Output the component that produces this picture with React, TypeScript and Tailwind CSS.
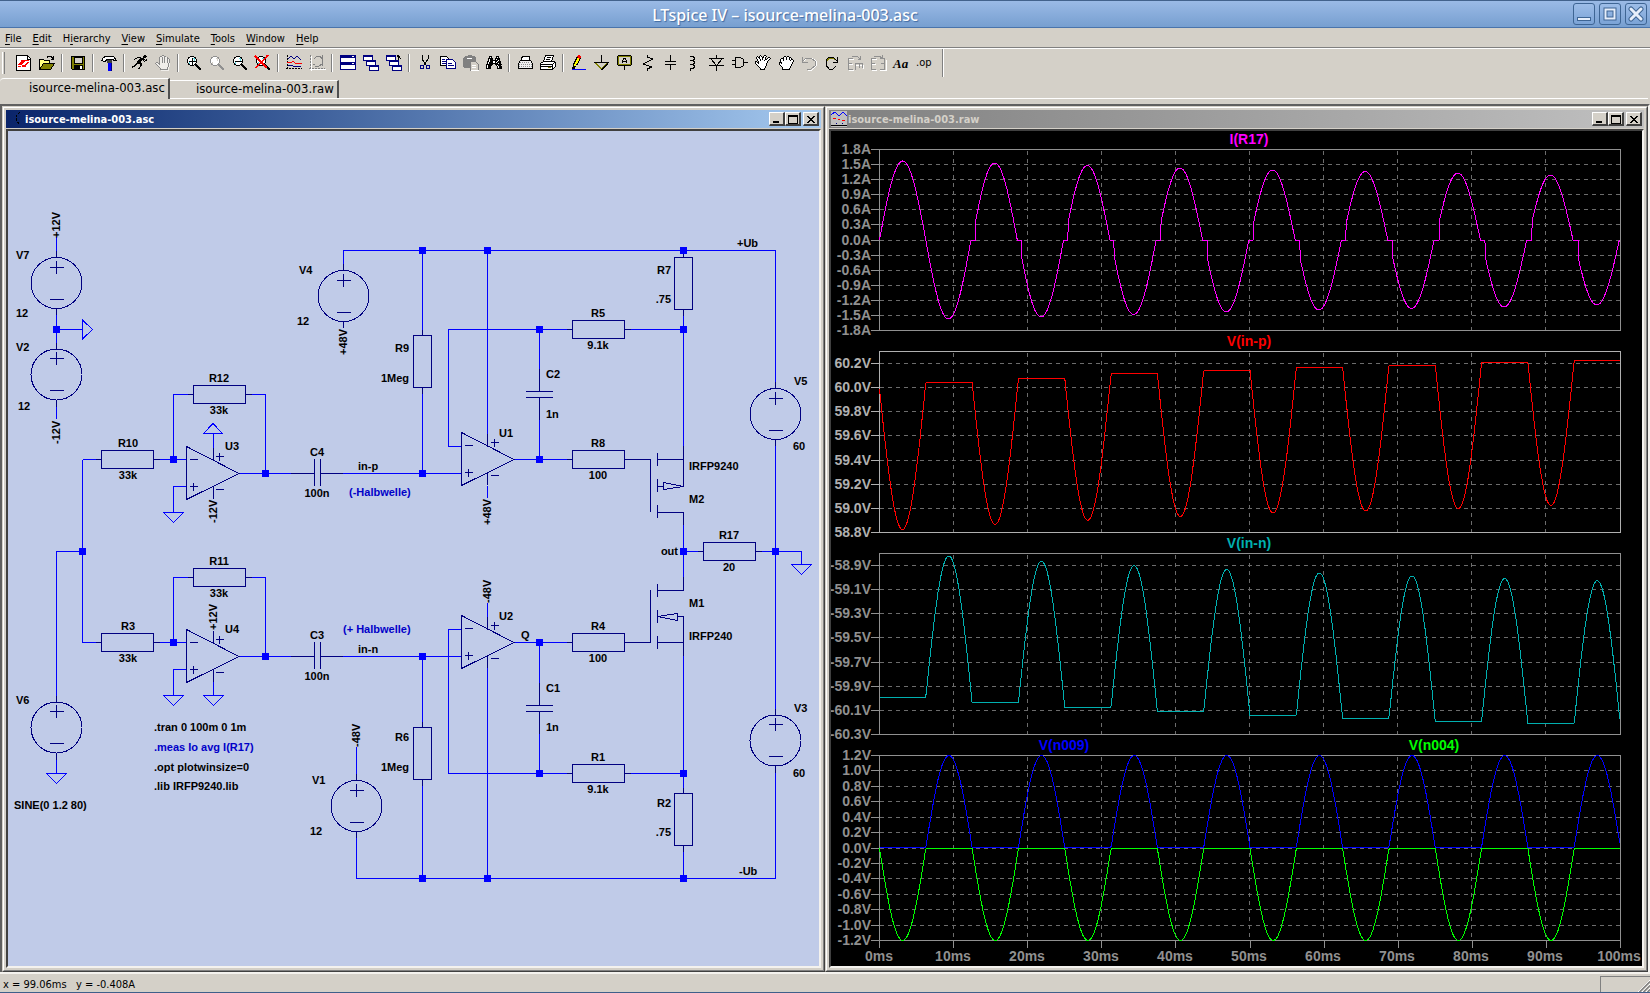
import type { ReactNode } from "react";

/* ---------- toolbar icons, all on a 16x16 grid ---------- */

const Pixels = ({ rows, ink = "#000", fill = "#fff" }: { rows: string[]; ink?: string; fill?: string }) => (
  <>
    {rows.flatMap((row, y) =>
      [...row].map((c, x) =>
        c === "." ? null : (
          <rect key={`${x}-${y}`} x={x} y={y} width="1" height="1" fill={c === "#" ? ink : fill} />
        )
      )
    )}
  </>
);

const RUNNER = [
  "............##..",
  "...........####.",
  ".....####..###..",
  "...##...####....",
  "..#....######.#.",
  "......####.#.##.",
  ".....####...#...",
  ".....####.......",
  "....######......",
  "...##...##......",
  "..##....##......",
  "###.....#.......",
  "#......#........",
  "......##........",
];

const STOP_HAND = [
  ".......##.......",
  ".....##oo##.....",
  "....#oo#o#oo#...",
  "....#oo#o#oo##..",
  "....#oo#o#oo#o#.",
  "....#oo#o#oo#o#.",
  "....#oo#o#oo#o#.",
  ".##.#oo#o#oo#o#.",
  "#oo##oooooooo#o.",
  ".#oo#oooooooo#o.",
  "..#oooooooooo#o.",
  "...#ooooooooo#o.",
  "....#ooooooo#o..",
  ".....#oooooo#o..",
  ".....########o..",
  "......oooooooo..",
];

const SPREAD_HAND = [
  ".....#...##.....",
  "..#.#o#.#oo#....",
  ".#o##oo##o#..##.",
  ".#oo#oo#oo#.#oo#",
  "..#oo#o#oo##oo#.",
  "..#oo#ooo#ooo#..",
  "##.#oooooooo#...",
  "#o##oooooooo#...",
  "#oo#ooooooo#....",
  ".#ooooooooo#....",
  "..#oooooooo#....",
  "...#oooooo#.....",
  "....#ooooo#.....",
  ".....#ooo#......",
  ".....#####......",
];

const CLOSED_HAND = [
  "................",
  "......##.##.....",
  ".....#oo#oo##...",
  "...###oo#oo#o#..",
  "..#oo#oo#oo#o##.",
  "..#oo#oooooo#oo#",
  "..#oooooooooooo#",
  ".###oooooooooo#.",
  ".#o#oooooooooo#.",
  ".#ooooooooooo#..",
  "..#oooooooooo#..",
  "...#oooooooo#...",
  "....#ooooooo#...",
  "....#oooooo#....",
  "....########....",
];

const BINOCULARS = [
  "................",
  "...###....###...",
  "...#o#....#o#...",
  "..#####..#####..",
  "..#o###..#o###..",
  "..#o########o#..",
  ".##o###oo##o###.",
  ".#o####oo#o####.",
  ".#o#########o##.",
  "#######..#######",
  "#o####....#o###.",
  "#o###......#o###",
  "#o###......#o###",
  "#####......#####",
];

const Magnifier = ({ glass = "#5fd8e0", stroke = "#000" }: { glass?: string; stroke?: string }) => (
  <>
    <circle cx="6" cy="6" r="4.500" fill="#fff" stroke={stroke} />
    <path d="M7 3.500h2M8.500 4v2M3.500 7v2" stroke={glass} />
    <path d="M9.500 9.500l5.500 5.500" stroke={stroke} strokeWidth="2" />
  </>
);

const Cascade = () => (
  <>
    {[
      [0, 0],
      [3, 5],
      [6, 10],
    ].map(([x, y]) => (
      <g key={x}>
        <rect x={x + 0.5} y={y + 0.5} width="9" height="5" fill="#fff" stroke="#000080" />
        <path d={`M${x} ${y + 1}h10`} stroke="#000080" strokeWidth="2" />
      </g>
    ))}
  </>
);

type Tool = { name: string; icon: ReactNode };

const TOOL_GROUPS: Tool[][] = [
  [
    {
      name: "New schematic",
      icon: (
        <>
          <path d="M.5.5h11l3 3v12H.5z" fill="#fff" stroke="#000" />
          <path d="M11.500 1v3h3" fill="none" stroke="#000" />
          <path d="M2 11.500h3M3 10l3-4h3M9 5.500h4M6 11h3l3-4M8 6l-3 4" fill="none" stroke="#f00" strokeWidth="1.500" />
        </>
      ),
    },
    {
      name: "Open",
      icon: (
        <>
          <path d="M.5 14.500v-10h4l1 1h5v3" fill="#ffff80" stroke="#000" />
          <path d="M.5 14.500l4-6h11l-4 6z" fill="#808000" stroke="#000" />
          <path d="M8 2.500c2-2 4-2 6 1M14.500 1v3h-3" fill="none" stroke="#000" />
        </>
      ),
    },
  ],
  [
    {
      name: "Save",
      icon: (
        <>
          <path d="M1.500 1.500h13v13h-12l-1-1z" fill="#808000" stroke="#000" />
          <rect x="4" y="2" width="8" height="6" fill="#d4d0c8" stroke="#000" />
          <rect x="4" y="10" width="9" height="5" fill="#000" />
          <rect x="10" y="11" width="2" height="3" fill="#fff" />
        </>
      ),
    },
  ],
  [
    {
      name: "Control panel",
      icon: (
        <>
          <path d="M.5 5.500l2-3 2-1h8l3 4h-2l-2-1H6l-2 2z" fill="#fff" stroke="#000" />
          <path d="M6 5h5v3H6z" fill="#404040" />
          <path d="M7 8h4v8H7z" fill="#00f" />
          <path d="M10.500 8v8" stroke="#000080" />
        </>
      ),
    },
  ],
  [
    { name: "Run", icon: <Pixels rows={RUNNER} /> },
    { name: "Halt", icon: <Pixels rows={STOP_HAND} ink="#8a8a8a" fill="#f0eeea" /> },
  ],
  [
    {
      name: "Zoom in",
      icon: (
        <>
          <Magnifier />
          <path d="M3 6.500h7M6.500 3v7" stroke="#000" />
        </>
      ),
    },
    { name: "Pan", icon: <Magnifier glass="#d4d0c8" stroke="#909090" /> },
    {
      name: "Zoom out",
      icon: (
        <>
          <Magnifier />
          <path d="M3 6.500h7" stroke="#000" />
        </>
      ),
    },
    {
      name: "Zoom full extents",
      icon: (
        <>
          <Magnifier />
          <path d="M0 1l12 12M13 0L1 13" stroke="#f00" strokeWidth="1.500" />
        </>
      ),
    },
  ],
  [
    {
      name: "Autorange",
      icon: (
        <>
          <path d="M1.500 0v15M0 13.500h16" stroke="#000" strokeDasharray="2 1" />
          <path d="M2 4l3-3 3 3 3-3 4 4" fill="none" stroke="#000080" />
          <path d="M1 7.500h4l2-1 3 2h6" fill="none" stroke="#f00" />
          <path d="M2 10.500h4l2 1h7" fill="none" stroke="#000080" />
        </>
      ),
    },
    {
      name: "Plot settings",
      icon: (
        <>
          <path d="M2.500 1v15M1 14.500h16" stroke="#fff" />
          <path d="M1.500 0v15M0 13.500h16" stroke="#808080" strokeDasharray="2 1" />
          <path d="M4 9.500h2M5 4l3-3h3l2 3v5l-3 2H6M13.500 0v11" fill="none" stroke="#808080" />
        </>
      ),
    },
  ],
  [
    {
      name: "Tile windows",
      icon: (
        <>
          <rect x="0.500" y="0.500" width="15" height="7" fill="#fff" stroke="#000080" />
          <rect x="0.500" y="7.500" width="15" height="7" fill="#fff" stroke="#000080" />
          <path d="M0 1.500h16M0 8.500h16" stroke="#000080" strokeWidth="3" />
          <path d="M12 1.500h2M12 8.500h2" stroke="#fff" />
        </>
      ),
    },
    { name: "Cascade windows", icon: <Cascade /> },
    {
      name: "Close windows",
      icon: (
        <>
          <Cascade />
          <path d="M12.500 5V0M11 1.500h3M15 4l-4-4" stroke="#000" />
        </>
      ),
    },
  ],
  [
    {
      name: "Cut",
      icon: (
        <>
          <path d="M5 0v4l4 6M11 0v4L7 10" fill="none" stroke="#000" />
          <circle cx="5" cy="12" r="2" fill="none" stroke="#000080" />
          <circle cx="11" cy="12" r="2" fill="none" stroke="#000080" />
        </>
      ),
    },
    {
      name: "Copy",
      icon: (
        <>
          <path d="M.5 1.500h6l3 3v6h-9z" fill="#fff" stroke="#000" />
          <path d="M6.500 4.500h6l3 3v6h-9z" fill="#fff" stroke="#000080" />
          <path d="M2 4.500h3M2 6.500h4M2 8.500h4M8 8.500h4M8 10.500h6" stroke="#000080" />
        </>
      ),
    },
    {
      name: "Paste",
      icon: (
        <>
          <path d="M0 3l2-2h2l1-1h3l1 1h3l1 2v10H1L0 12z" fill="#808080" />
          <path d="M4 3.500h5" stroke="#fff" />
          <path d="M7.500 6.500h5l3 3v6h-8z" fill="#d4d0c8" stroke="#808080" />
          <path d="M9 10.500h4M9 12.500h4M8 15.500h8" stroke="#fff" />
        </>
      ),
    },
    { name: "Find", icon: <Pixels rows={BINOCULARS} /> },
  ],
  [
    {
      name: "Print",
      icon: (
        <>
          <path d="M4.500 6V3l2-2h6v5" fill="#fff" stroke="#000" />
          <path d="M1.500 8.500l2-3h10l2 3v5h-14z" fill="#f0f0f0" stroke="#000" />
          <path d="M3 7.500h10M2 9.500h13M2 11.500h13" stroke="#909090" strokeDasharray="1 1" />
        </>
      ),
    },
    {
      name: "Print setup",
      icon: (
        <>
          <path d="M3.500 6.500l2-6h8l-2 6z" fill="#fff" stroke="#000" />
          <path d="M.5 8.500l3-2h11l1 1v4l-3 3H.5z" fill="#fff" stroke="#000" />
          <path d="M1 9.500h11l3-2M1 11.500h11M7 2.500h4M6 4.500h4M12.500 9v5" stroke="#000" fill="none" />
          <path d="M8 12.500h3" stroke="#808000" />
        </>
      ),
    },
  ],
  [
    {
      name: "Wire",
      icon: (
        <>
          <path d="M2.500 9.500l4-8 3 2-4 7-3 2z" fill="#ff0" stroke="#000" />
          <path d="M6 2l1-2h2l1 2-1 2z" fill="#f00" />
          <path d="M1 13h3" stroke="#000" strokeWidth="2" />
          <path d="M1 14.500h14" stroke="#00f" />
        </>
      ),
    },
    {
      name: "Ground",
      icon: (
        <>
          <path d="M7.500 0v7" stroke="#000" />
          <path d="M1 7.500h13l-6.500 6.500z" fill="#d4d0c8" stroke="#808000" />
          <path d="M0 7.500h15M14 8.500L7.500 15" stroke="#000" />
        </>
      ),
    },
    {
      name: "Label net",
      icon: (
        <>
          <rect x="1.500" y="1.500" width="12" height="8" fill="none" stroke="#808000" />
          <path d="M1 .5h13M.5 1v9M14.500 1v9M1 10.500h13M7.500 11v4" stroke="#000" />
          <path d="M5.500 8V5M9.500 8V5M6 3.500h3M6 6.500h3M6 4.500h1M8 4.500h1" fill="none" stroke="#000" />
        </>
      ),
    },
    { name: "Resistor", icon: <path d="M7.500 0v2l5 2-9 5 8 3-4 2v2" fill="none" stroke="#000" /> },
    { name: "Capacitor", icon: <path d="M7.500 0v6M2 6.500h11M2 9.500h11M7.500 10v5" stroke="#000" /> },
    {
      name: "Inductor",
      icon: <path d="M4 .5v1h3l1 1v2l-1 1H4M4 5.500h3l1 1v2l-1 1H4M4 9.500h3l1 1v2l-1 1H4v2" fill="none" stroke="#000" />,
    },
    {
      name: "Diode",
      icon: <path d="M7.500 0v3M0 3.500h15M2 4l5.500 6.500L13 4M0 10.500h15M7.500 10v6" fill="none" stroke="#000" />,
    },
    {
      name: "Component",
      icon: <path d="M3.500 2.500h5l3 2v6l-3 2h-5zM0 5.500h3M0 9.500h3M12 7.500h4" fill="none" stroke="#000" />,
    },
    { name: "Move", icon: <Pixels rows={SPREAD_HAND} /> },
    { name: "Drag", icon: <Pixels rows={CLOSED_HAND} /> },
    {
      name: "Undo",
      icon: (
        <>
          <path d="M3 6l3-3h5l4 3v5l-4 4H7" fill="none" stroke="#fff" />
          <path d="M1.500 2v5h5M2 6l3-3h5l4 3v5l-4 3H6" fill="none" stroke="#909090" />
        </>
      ),
    },
    {
      name: "Redo",
      icon: (
        <>
          <path d="M12 5l-3-3H5L2 5v5l3 4h4l3-3" fill="none" stroke="#000" />
          <path d="M3 6l2-3h4l2 2" fill="none" stroke="#808000" />
          <path d="M13.500 2v5h-5M12 5l2 2" fill="none" stroke="#000" />
        </>
      ),
    },
    {
      name: "Rotate",
      icon: (
        <>
          <path d="M2 4h5M2 9h4M2 15h5M9 10h7v4" fill="none" stroke="#fff" />
          <path
            d="M6 3.500H1.500v11H6M1 8.500h4M8.500 15V8.500h7V13M12 8v5M5 2l2-1h3l3 3M13.500 1v3h-3"
            fill="none"
            stroke="#909090"
          />
        </>
      ),
    },
    {
      name: "Mirror",
      icon: (
        <>
          <path d="M2 4h5M2 9h4M2 15h5M10 15h6V5" fill="none" stroke="#fff" />
          <path
            d="M6 3.500H1.500v11H6M1 8.500h4M10 3.500h4.500v11H10M11 8.500h4M4 2l2-1h3l3 2M12.500 0v3h-3"
            fill="none"
            stroke="#909090"
          />
        </>
      ),
    },
    {
      name: "Text",
      icon: (
        <text x="0" y="13" fontSize="13" fontStyle="italic" fontWeight="700" className="font-['Liberation_Serif',serif]">
          Aa
        </text>
      ),
    },
    {
      name: "SPICE directive",
      icon: (
        <text x="0" y="11" fontSize="11" className="font-['DejaVu_Sans_Condensed',sans-serif]">
          .op
        </text>
      ),
    },
  ],
];

/* ---------- schematic ---------- */

const WIRES = [
  "M56.500 237V257M56.500 308V348M56.500 400V419M56.500 329.500H82.500",
  "M343.500 264V250.500H775.500V388M343.500 321V328",
  "M422.500 250.500V335M422.500 388V473.500",
  "M487.500 250.500V440M487.500 486V498",
  "M265.500 473.500V394.500H245M193 394.500H173.500V459.500",
  "M82.500 459.500H101M154 459.500H186M82.500 459.500V642.500H101M154 642.500H186",
  "M82.500 551.500H56.500V701M56.500 753V773",
  "M239 473.500H314M321 473.500H461",
  "M186 486.500H173.500V512M213.500 434V448",
  "M265.500 656.500V577.500H245M193 577.500H173.500V642.500",
  "M239 656.500H314M321 656.500H461",
  "M186 669.500H173.500V695M213.500 682V695",
  "M461 446.500H448.500V329.500H572M625 329.500H683.500",
  "M539.500 329.500V391M539.500 398V459.500M513 459.500H572M625 459.500H650",
  "M683.500 250V257M683.500 310V460M683.500 512V590",
  "M683.500 551.500H703M756 551.500H801.500V564",
  "M775.500 440V714M775.500 767V878.500H356.500V832M356.500 747V780",
  "M461 629.500H448.500V773.500H572M625 773.500H683.500",
  "M513 642.500H572M625 642.500H650M539.500 642.500V705M539.500 712V773",
  "M683.500 642V793M683.500 846V878",
  "M422.500 656.500V727M422.500 781V878M487.500 603V620M487.500 664V878",
];

const JUNCTIONS = [
  [56, 329], [82, 551], [173, 459], [265, 473], [173, 642], [265, 656],
  [422, 250], [487, 250], [683, 250], [422, 473], [539, 329], [683, 329],
  [539, 459], [683, 551], [775, 551], [422, 656], [539, 642], [539, 773],
  [683, 773], [422, 878], [487, 878], [683, 878],
];

const SOURCES = [
  [56.5, 283], [56.5, 374.5], [343.5, 296], [56.5, 727.5], [356.5, 806], [775.5, 414], [775.5, 740.5],
];

const H_RESISTORS = [
  [219.5, 394.5], [127.5, 459.5], [219.5, 577.5], [127.5, 642.5],
  [598.5, 329.5], [598.5, 459.5], [598.5, 642.5], [598.5, 773.5], [729.5, 551.5],
];

const V_RESISTORS = [
  [422.5, 361.5], [422.5, 753.5], [683.5, 283.5], [683.5, 819.5],
];

const OPAMPS = [
  [186.5, 473.5], [186.5, 656.5], [461.5, 459.5], [461.5, 642.5],
];

const GROUNDS = [
  [173.5, 512.5], [173.5, 695.5], [213.5, 695.5], [56.5, 773.5], [801.5, 564.5],
];

type Label = { x: number; y: number; t: string; a?: "middle" | "end"; blue?: boolean };

const LABELS: Label[] = [
  { x: 16, y: 259, t: "V7" },
  { x: 16, y: 317, t: "12" },
  { x: 16, y: 351, t: "V2" },
  { x: 18, y: 410, t: "12" },
  { x: 299, y: 274, t: "V4" },
  { x: 297, y: 325, t: "12" },
  { x: 219, y: 382, t: "R12", a: "middle" },
  { x: 219, y: 414, t: "33k", a: "middle" },
  { x: 128, y: 447, t: "R10", a: "middle" },
  { x: 128, y: 479, t: "33k", a: "middle" },
  { x: 225, y: 450, t: "U3" },
  { x: 317, y: 456, t: "C4", a: "middle" },
  { x: 317, y: 497, t: "100n", a: "middle" },
  { x: 358, y: 470, t: "in-p" },
  { x: 349, y: 496, t: "(-Halbwelle)", blue: true },
  { x: 409, y: 352, t: "R9", a: "end" },
  { x: 409, y: 382, t: "1Meg", a: "end" },
  { x: 598, y: 317, t: "R5", a: "middle" },
  { x: 598, y: 349, t: "9.1k", a: "middle" },
  { x: 598, y: 447, t: "R8", a: "middle" },
  { x: 598, y: 479, t: "100", a: "middle" },
  { x: 671, y: 274, t: "R7", a: "end" },
  { x: 671, y: 303, t: ".75", a: "end" },
  { x: 737, y: 247, t: "+Ub" },
  { x: 794, y: 385, t: "V5" },
  { x: 793, y: 450, t: "60" },
  { x: 546, y: 378, t: "C2" },
  { x: 546, y: 418, t: "1n" },
  { x: 499, y: 437, t: "U1" },
  { x: 689, y: 470, t: "IRFP9240" },
  { x: 689, y: 503, t: "M2" },
  { x: 729, y: 539, t: "R17", a: "middle" },
  { x: 729, y: 571, t: "20", a: "middle" },
  { x: 678, y: 555, t: "out", a: "end" },
  { x: 499, y: 620, t: "U2" },
  { x: 521, y: 639, t: "Q" },
  { x: 598, y: 630, t: "R4", a: "middle" },
  { x: 598, y: 662, t: "100", a: "middle" },
  { x: 689, y: 607, t: "M1" },
  { x: 689, y: 640, t: "IRFP240" },
  { x: 546, y: 692, t: "C1" },
  { x: 546, y: 731, t: "1n" },
  { x: 598, y: 761, t: "R1", a: "middle" },
  { x: 598, y: 793, t: "9.1k", a: "middle" },
  { x: 794, y: 712, t: "V3" },
  { x: 793, y: 777, t: "60" },
  { x: 671, y: 807, t: "R2", a: "end" },
  { x: 671, y: 836, t: ".75", a: "end" },
  { x: 739, y: 875, t: "-Ub" },
  { x: 219, y: 565, t: "R11", a: "middle" },
  { x: 219, y: 597, t: "33k", a: "middle" },
  { x: 128, y: 630, t: "R3", a: "middle" },
  { x: 128, y: 662, t: "33k", a: "middle" },
  { x: 225, y: 633, t: "U4" },
  { x: 317, y: 639, t: "C3", a: "middle" },
  { x: 317, y: 680, t: "100n", a: "middle" },
  { x: 343, y: 633, t: "(+ Halbwelle)", blue: true },
  { x: 358, y: 653, t: "in-n" },
  { x: 16, y: 704, t: "V6" },
  { x: 14, y: 809, t: "SINE(0 1.2 80)" },
  { x: 154, y: 731, t: ".tran 0 100m 0 1m" },
  { x: 154, y: 751, t: ".meas Io avg I(R17)", blue: true },
  { x: 154, y: 771, t: ".opt plotwinsize=0" },
  { x: 154, y: 790, t: ".lib IRFP9240.lib" },
  { x: 409, y: 741, t: "R6", a: "end" },
  { x: 409, y: 771, t: "1Meg", a: "end" },
  { x: 312, y: 784, t: "V1" },
  { x: 310, y: 835, t: "12" },
];

// rail names run bottom to top; y is where the text starts
const RAIL_LABELS = [
  { x: 60, y: 238, t: "+12V" },
  { x: 60, y: 444, t: "-12V" },
  { x: 347, y: 355, t: "+48V" },
  { x: 217, y: 523, t: "-12V" },
  { x: 217, y: 630, t: "+12V" },
  { x: 491, y: 525, t: "+48V" },
  { x: 491, y: 603, t: "-48V" },
  { x: 360, y: 747, t: "-48V" },
];

function Schematic() {
  return (
    <svg viewBox="8 131 811 835" className="block h-full w-full" role="img" aria-label="Schematic">
      <g fill="none" shapeRendering="crispEdges">
        <path d={WIRES.join("")} stroke="#0000ff" />
        <g stroke="#0000ff">
          {GROUNDS.map(([x, y]) => (
            <path key={`${x}-${y}`} d={`M${x - 10} ${y}h20l-10 10z`} />
          ))}
          <path d="M82.500 320v19l10-9.500zM203.500 433.500h19l-9.500-10z" />
        </g>
        <g stroke="#000080">
          {SOURCES.map(([x, y]) => (
            <g key={`${x}-${y}`}>
              <circle cx={x} cy={y} r="25.500" />
              <path d={`M${x - 7} ${Math.floor(y) - 15.5}h14M${x} ${Math.floor(y) - 22}v13M${x - 7} ${Math.floor(y) + 16.5}h14`} />
              <path d={`M${x} ${y - 32}v6M${x} ${y + 26}v6`} />
            </g>
          ))}
          {H_RESISTORS.map(([x, y]) => (
            <path key={`${x}-${y}`} d={`M${x - 26} ${y - 9}h52v18h-52zM${x - 32} ${y}h6M${x + 26} ${y}h6`} />
          ))}
          {V_RESISTORS.map(([x, y]) => (
            <path key={`${x}-${y}`} d={`M${x - 9} ${y - 26}h18v52h-18zM${x} ${y - 32}v6M${x} ${y + 26}v6`} />
          ))}
          {OPAMPS.map(([x, y]) => (
            <g key={`${x}-${y}`}>
              <path d={`M${x} ${y - 27}v53L${x + 52.5} ${y}z`} />
              <path d={`M${x + 3} ${y - 14}h8M${x + 3} ${y + 13}h8M${x + 7} ${y + 9}v8`} />
              <path d={`M${x + 29} ${y - 17}h8M${x + 33} ${y - 21}v8M${x + 29} ${y + 16}h8`} />
              <path d={`M${x + 27 - (x > 400 ? 1 : 0)} ${y - 26}v13M${x + 27 - (x > 400 ? 1 : 0)} ${y + 13}v12`} />
            </g>
          ))}
          <path d="M291 473.500H314M321 473.500H343M314.500 459V486M320.500 459V486" />
          <path d="M291 656.500H314M321 656.500H343M314.500 642V669M320.500 642V669" />
          <path d="M526 391.500H553M526 397.500H553M539.500 369V391M539.500 398V420" />
          <path d="M526 705.500H553M526 711.500H553M539.500 683V705M539.500 712V734" />
          <path d="M650.500 459V512M657.500 453V466M657.500 479V492M657.500 505V518M630 459.500H650" />
          <path d="M657 459.500H683M683.500 446V486.500M657 486.500H663M663.500 482.500V489.500L683 486.500zM657 512.500H683.500V525" />
          <path d="M650.500 590V643M657.500 584V597M657.500 610V623M657.500 636V649M630 642.500H650" />
          <path d="M683.500 577V590.500H657M657.500 616.500L677.500 613.500V620.500zM677 616.500H683.500V656M657 642.500H683" />
        </g>
      </g>
      <g fill="#0000ff">
        {JUNCTIONS.map(([x, y]) => (
          <rect key={`${x}-${y}`} x={x - 3} y={y - 3} width="7" height="7" />
        ))}
      </g>
      <g className="font-['Liberation_Sans',sans-serif] text-[11px] font-bold">
        {LABELS.map(({ x, y, t, a, blue }) => (
          <text key={`${x}-${y}`} x={x} y={y} textAnchor={a} fill={blue ? "#0000c8" : "#000"}>
            {t}
          </text>
        ))}
        {RAIL_LABELS.map(({ x, y, t }) => (
          <text key={`${x}-${y}`} transform={`translate(${x} ${y}) rotate(-90)`}>
            {t}
          </text>
        ))}
      </g>
    </svg>
  );
}

/* ---------- waveforms ---------- */

const LEFT = 879.5;
const PX_PER_MS = 7.41;
const HALF = 6.25; // ms, half a period at 80 Hz

type Trace = { color: string; at: (t: number) => number };
type Pane = {
  top: number;
  bottom: number;
  first: number;
  ticks: string[];
  axis: string;
  titles: { x: number; t: string; color: string }[];
  traces: Trace[];
};

const lerp = (a: number, b: number, s: number) => a + (b - a) * s;

const R17_PEAKS = [79, 77, 74.5, 72, 70, 68.5, 67, 65];
function currentR17(t: number) {
  const n = Math.floor(t / HALF);
  const s = (t - n * HALF) / HALF;
  const cycle = Math.floor(n / 2);
  const sign = n % 2 ? -1 : 1;
  const dead = n < 2 ? 0 : 0.06 + n * 0.002;
  const stop = n < 1 ? 1 : 0.975;
  if (s < dead || s > stop) return 240;
  return 240 - sign * (R17_PEAKS[cycle] ?? 65) * Math.sin((Math.PI * s) / stop);
}

const INP_FLAT = [389, 382.5, 378.3, 373.8, 370.3, 367.6, 365, 362.5, 360.5];
const INP_DIP = [529.5, 524.5, 520.3, 516.5, 513, 511, 508.5, 505.5];
function inP(t: number) {
  const cycle = Math.min(Math.floor(t / 12.5), 7);
  const s = (t - cycle * 12.5) / HALF;
  if (s > 1) return INP_FLAT[cycle + 1];
  const base = lerp(INP_FLAT[cycle], INP_FLAT[cycle + 1], s);
  const mid = (INP_FLAT[cycle] + INP_FLAT[cycle + 1]) / 2;
  return base + (INP_DIP[cycle] - mid) * Math.sin(Math.PI * s);
}

const INN_FLAT = [697.3, 702.6, 707.3, 711.6, 715.4, 718.5, 721.4, 723.6, 726];
const INN_PEAK = [556, 561.3, 565.6, 569.5, 573, 576, 578.5, 580.7];
function inN(t: number) {
  const cycle = Math.min(Math.floor(t / 12.5), 7);
  const s = (t - cycle * 12.5) / HALF - 1;
  if (s < 0) return INN_FLAT[cycle];
  const base = lerp(INN_FLAT[cycle], INN_FLAT[cycle + 1], s);
  const mid = (INN_FLAT[cycle] + INN_FLAT[cycle + 1]) / 2;
  return base - (mid - INN_PEAK[cycle]) * Math.sin(Math.PI * s);
}

const drive = (t: number) => Math.sin((Math.PI * t) / HALF);

const series = (from: number, to: number, step: number, unit: string) => {
  const out: string[] = [];
  const count = Math.round(Math.abs(to - from) / Math.abs(step));
  for (let i = 0; i <= count; i++) {
    const v = from + i * step;
    out.push((Math.abs(v) < 0.01 ? 0 : v).toFixed(1) + unit);
  }
  return out;
};

const PANES: Pane[] = [
  {
    top: 149.5,
    bottom: 330.5,
    first: 149.5,
    ticks: series(1.8, -1.8, -0.3, "A"),
    axis: "#909090",
    titles: [{ x: 1249, t: "I(R17)", color: "#ff00ff" }],
    traces: [{ color: "#ff00ff", at: currentR17 }],
  },
  {
    top: 351.5,
    bottom: 532.5,
    first: 363.5,
    ticks: series(60.2, 58.8, -0.2, "V"),
    axis: "#b0b0b0",
    titles: [{ x: 1249, t: "V(in-p)", color: "#ff0000" }],
    traces: [{ color: "#ff0000", at: inP }],
  },
  {
    top: 553.5,
    bottom: 734.5,
    first: 565.5,
    ticks: series(-58.9, -60.3, -0.2, "V"),
    axis: "#909090",
    titles: [{ x: 1249, t: "V(in-n)", color: "#00b0b0" }],
    traces: [{ color: "#00b0b0", at: inN }],
  },
  {
    top: 755.5,
    bottom: 940.5,
    first: 755.5,
    ticks: series(1.2, -1.2, -0.2, "V"),
    axis: "#909090",
    titles: [
      { x: 1064, t: "V(n009)", color: "#0000ff" },
      { x: 1434, t: "V(n004)", color: "#00ff00" },
    ],
    traces: [
      { color: "#0000ff", at: (t) => 847.5 - 92 * Math.max(0, -drive(t)) },
      { color: "#00ff00", at: (t) => 848.5 + 92 * Math.max(0, drive(t)) },
    ],
  },
];

const tracePoints = (at: Trace["at"]) => {
  const points: string[] = [];
  for (let t = 0; t < 99.99; t += 0.1) {
    points.push(`${(LEFT + t * PX_PER_MS).toFixed(1)},${at(t).toFixed(1)}`);
  }
  return points.join(" ");
};

const TENS = [0, 1, 2, 3, 4, 5, 6, 7, 8, 9, 10];
const RIGHT = LEFT + 741;

function Waveforms() {
  return (
    <svg viewBox="831 131 811 835" className="block h-full w-full" role="img" aria-label="Waveforms">
      <g className="font-['Liberation_Sans',sans-serif] text-[14px] font-bold">
        {PANES.map((pane) => {
          const pitch = (pane.bottom - pane.first) / (pane.ticks.length - 1);
          const rows = pane.ticks.map((label, i) => ({ label, y: Math.floor(pane.first + i * pitch) + 0.5 }));
          return (
            <g key={pane.top}>
              <g shapeRendering="crispEdges" fill="none">
                <g stroke="#6c6c6c" strokeDasharray="4 4">
                  {rows.map(({ y }) => (
                    <path key={y} d={`M${LEFT} ${y}H${RIGHT}`} />
                  ))}
                  {TENS.slice(1, -1).map((n) => (
                    <path key={n} d={`M${Math.floor(LEFT + n * 74) + 0.5} ${pane.top + 1}V${pane.bottom}`} />
                  ))}
                </g>
                <rect x={LEFT} y={pane.top} width="741" height={pane.bottom - pane.top} stroke={pane.axis} />
                {rows.map(({ y }) => (
                  <path key={y} d={`M871 ${y}h8`} stroke={pane.axis} />
                ))}
                {pane.traces.map(({ color, at }) => (
                  <polyline key={color} points={tracePoints(at)} stroke={color} />
                ))}
              </g>
              {rows.map(({ label, y }) => (
                <text key={y} x="871" y={y + 4.5} textAnchor="end" fill={pane.axis}>
                  {label}
                </text>
              ))}
              {pane.titles.map(({ x, t, color }) => (
                <text key={t} x={x} y={Math.floor(pane.top) - 5} textAnchor="middle" fill={color}>
                  {t}
                </text>
              ))}
            </g>
          );
        })}
        {TENS.map((n) => (
          <g key={n}>
            <path d={`M${Math.floor(LEFT + n * 74.1) + 0.5} 941v7`} stroke="#909090" shapeRendering="crispEdges" />
            <text x={Math.floor(LEFT + n * 74)} y="961" textAnchor="middle" fill="#909090">
              {n * 10}ms
            </text>
          </g>
        ))}
      </g>
    </svg>
  );
}

/* ---------- window chrome ---------- */

function CaptionButton({ label, children }: { label: string; children: ReactNode }) {
  return (
    <button
      type="button"
      aria-label={label}
      className="flex h-3.5 w-4 items-center justify-center border-t border-r-2 border-b-2 border-l border-t-white border-r-[#404040] border-b-[#404040] border-l-white bg-[#d4d0c8]"
    >
      <svg viewBox="0 0 12 10" className="h-2.5 w-3" shapeRendering="crispEdges" aria-hidden>
        {children}
      </svg>
    </button>
  );
}

function ChildWindow({
  title,
  icon,
  barClass,
  titleClass,
  clientClass,
  children,
}: {
  title: string;
  icon: ReactNode;
  barClass: string;
  titleClass: string;
  clientClass: string;
  children: ReactNode;
}) {
  return (
    <section className="flex min-h-0 min-w-0 flex-col border border-t-[#d4d0c8] border-r-[#404040] border-b-[#404040] border-l-[#d4d0c8] bg-[#d4d0c8]">
      <div className="flex min-h-0 flex-1 flex-col gap-px border border-t-white border-r-[#808080] border-b-[#808080] border-l-white p-0.5">
        <header className={`flex h-[18px] shrink-0 items-center pr-0.5 ${barClass}`}>
          <svg viewBox="0 0 16 16" className="ml-0.5 h-4 w-4 shrink-0" shapeRendering="crispEdges" aria-hidden>
            {icon}
          </svg>
          <h2 className={`ml-px flex-1 truncate pt-0.5 text-[11px] leading-4 font-bold ${titleClass}`}>{title}</h2>
          <CaptionButton label="Minimize">
            <path d="M2 8h6" stroke="#000" strokeWidth="2" />
          </CaptionButton>
          <CaptionButton label="Maximize">
            <rect x="1.500" y="1.500" width="9" height="8" fill="none" stroke="#000" />
            <path d="M1 2h10" stroke="#000" strokeWidth="2" />
          </CaptionButton>
          <span className="w-0.5" />
          <CaptionButton label="Close">
            <path d="M2 2l7 7M3 2l7 7M9 2L2 9M10 2L3 9" stroke="#000" />
          </CaptionButton>
        </header>
        <div
          className={`min-h-0 flex-1 border-t-2 border-r-2 border-b-2 border-l-2 border-t-[#404040] border-r-[#f4f2ee] border-b-[#f4f2ee] border-l-[#404040] ${clientClass}`}
        >
          {children}
        </div>
      </div>
    </section>
  );
}

function FrameButton({ label, children }: { label: string; children: ReactNode }) {
  return (
    <button
      type="button"
      aria-label={label}
      className="flex h-[22px] w-[22px] items-center justify-center rounded-[3px] border border-[#3e6594] bg-linear-to-b from-[#9dbde8] to-[#7ba3d6]"
    >
      <svg viewBox="0 0 16 16" className="h-4 w-4" fill="none" aria-hidden>
        {children}
      </svg>
    </button>
  );
}

const MENU = [
  ["", "F", "ile"],
  ["", "E", "dit"],
  ["H", "i", "erarchy"],
  ["", "V", "iew"],
  ["", "S", "imulate"],
  ["", "T", "ools"],
  ["", "W", "indow"],
  ["", "H", "elp"],
];

export default function App() {
  return (
    <div className="flex h-screen w-full flex-col overflow-hidden border-b border-[#3f5f8a] bg-[#d4d0c8] font-['DejaVu_Sans_Condensed','DejaVu_Sans',sans-serif] text-[11px] text-black">
      <header className="relative flex h-7 shrink-0 items-center justify-end gap-1 border-t border-b border-t-[#42628c] border-b-[#4a74ab] bg-linear-to-b from-[#9abae6] to-[#779fd0] pr-[3px]">
        <h1 className="absolute inset-x-0 top-1 pr-20 text-center font-['Noto_Sans',sans-serif] text-[16px] leading-5 font-medium text-white [text-shadow:1px_1px_1px_#3f6aa0]">
          LTspice IV – isource-melina-003.asc
        </h1>
        <div className="relative flex gap-1">
          <FrameButton label="Minimize window">
            <rect x="1.500" y="11.500" width="13" height="3" fill="#e6eefa" stroke="#3e6594" />
          </FrameButton>
          <FrameButton label="Maximize window">
            <rect x="3.500" y="3.500" width="9" height="9" stroke="#3e6594" strokeWidth="4" />
            <rect x="3.500" y="3.500" width="9" height="9" stroke="#e6eefa" strokeWidth="2" />
          </FrameButton>
          <FrameButton label="Close window">
            <path d="M3 3l10 10M13 3L3 13" stroke="#3e6594" strokeWidth="5" strokeLinecap="round" />
            <path d="M3 3l10 10M13 3L3 13" stroke="#e6eefa" strokeWidth="3" strokeLinecap="round" />
          </FrameButton>
        </div>
      </header>

      <nav className="flex h-5 shrink-0 items-end border-b border-[#808080]" aria-label="Menu">
        {MENU.map(([pre, key, rest]) => (
          <button key={key + rest} type="button" className="pr-[5px] pl-1.5 leading-4 first:pl-[5px]">
            {pre}
            <u className="underline-offset-2">{key}</u>
            {rest}
          </button>
        ))}
      </nav>

      <div className="flex h-[29px] shrink-0 items-center border-t border-white" role="toolbar" aria-label="Tools">
        <span className="mr-[7px] ml-0.5 h-[22px] w-[3px] border-r border-l border-r-[#808080] border-l-white" />
        {TOOL_GROUPS.map((group, i) => (
          <div key={group[0].name} className="flex items-center">
            {i > 0 && (
              <span className="flex w-2 justify-center">
                <span className="h-[18px] w-0.5 border-r border-l border-r-white border-l-[#808080]" />
              </span>
            )}
            {group.map(({ name, icon }) => (
              <button key={name} type="button" aria-label={name} className="flex h-6 w-[23px] items-center justify-center">
                <svg viewBox="0 0 16 16" className="h-4 w-4 overflow-visible" shapeRendering="crispEdges" aria-hidden>
                  {icon}
                </svg>
              </button>
            ))}
          </div>
        ))}
        <span className="ml-[7px] w-0.5 self-stretch border-r border-l border-r-white border-l-[#808080]" />
      </div>

      <div className="flex h-[22px] shrink-0 items-stretch pr-0.5" role="tablist">
        <button
          type="button"
          role="tab"
          aria-selected
          className="mt-px w-[170px] rounded-tl-sm border-t border-r-2 border-t-white border-r-[#505050] pb-0.5 pl-[29px] text-left text-[13px] leading-4"
        >
          isource-melina-003.asc
        </button>
        <div className="flex flex-1 border-b border-white">
          <button
            type="button"
            role="tab"
            aria-selected={false}
            className="mt-[3px] w-[169px] border-t border-r-2 border-t-white border-r-[#505050] pb-0.5 pl-[26px] text-left text-[13px] leading-4"
          >
            isource-melina-003.raw
          </button>
        </div>
      </div>

      <main className="mt-[5px] grid min-h-0 flex-1 grid-cols-2 border-t-2 border-r-2 border-l-2 border-t-[#606060] border-r-[#f4f2ee] border-l-[#606060]">
        <ChildWindow
          title="isource-melina-003.asc"
          icon={<path d="M12 1l-4 4v4l4 5" fill="none" stroke="#000" strokeDasharray="3 1" />}
          barClass="bg-linear-to-r from-[#0a246a] to-[#a6caf0]"
          titleClass="text-white"
          clientClass="bg-[#c0cbe8]"
        >
          <Schematic />
        </ChildWindow>
        <ChildWindow
          title="isource-melina-003.raw"
          icon={
            <>
              <rect width="16" height="16" fill="#c0c0c0" />
              <path d="M0 4l4-3 4 4 4-4 4 4" fill="none" stroke="#00f" />
              <path d="M2 7.500h3M7 8.500h2M11 9.500h3" stroke="#f00" />
              <path d="M5 12.500h1M11 12.500h1" stroke="#000080" />
              <path d="M0 14.500h16" stroke="#000" />
            </>
          }
          barClass="bg-linear-to-r from-[#808080] to-[#c0c0c0]"
          titleClass="text-[#d4d0c8]"
          clientClass="bg-black"
        >
          <Waveforms />
        </ChildWindow>
      </main>

      <footer className="flex h-5 shrink-0 items-end justify-between border-t-2 border-[#f4f2ee]">
        <p className="h-[15px] pl-[3px] leading-4 whitespace-pre">x = 99.06ms   y = -0.408A</p>
        <div className="flex h-4 w-[50px] items-end justify-end border-t border-l border-[#808080]">
          <svg viewBox="0 0 12 12" className="h-3 w-3" aria-hidden>
            <path d="M0 12L12 0M4 12l8-8M8 12l4-4" stroke="#fff" />
            <path d="M1.500 12L12 1.500M5.500 12L12 5.500M9.500 12L12 9.500" stroke="#808080" strokeWidth="1.500" />
          </svg>
        </div>
      </footer>
    </div>
  );
}
